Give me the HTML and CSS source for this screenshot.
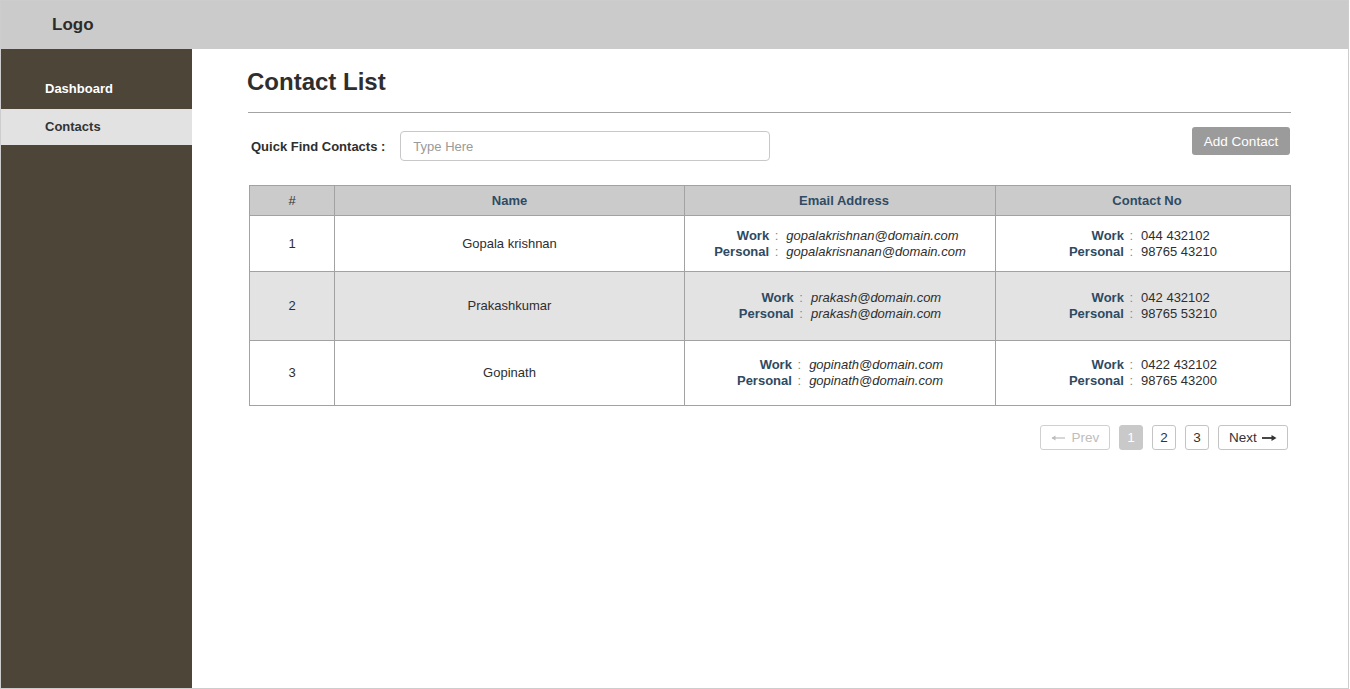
FILE: index.html
```html
<!DOCTYPE html>
<html>
<head>
<meta charset="utf-8">
<link rel="stylesheet" href="styles.css">
</head>
<body>
<div class="app">
  <header class="topbar"><span class="logo">Logo</span></header>
  <div class="body">
    <nav class="sidebar">
      <a class="nav-item nav-first">Dashboard</a>
      <a class="nav-item active">Contacts</a>
    </nav>
    <main class="main">
      <h1 class="title">Contact List</h1>
      <div class="rule"></div>
      <div class="toolbar">
        <div class="find">
          <label class="find-label">Quick Find Contacts :</label>
          <input class="find-input" type="text" placeholder="Type Here">
        </div>
        <button class="btn-add">Add Contact</button>
      </div>
      <table class="grid">
        <thead>
          <tr>
            <th class="c-num">#</th>
            <th class="c-name">Name</th>
            <th class="c-email">Email Address</th>
            <th class="c-phone">Contact No</th>
          </tr>
        </thead>
        <tbody>
          <tr class="row-1">
            <td>1</td>
            <td>Gopala krishnan</td>
            <td>
              <div class="pairs">
                <span class="k"><b>Work</b> :</span><span class="v em">gopalakrishnan@domain.com</span>
                <span class="k"><b>Personal</b> :</span><span class="v em">gopalakrisnanan@domain.com</span>
              </div>
            </td>
            <td>
              <div class="pairs">
                <span class="k"><b>Work</b> :</span><span class="v">044 432102</span>
                <span class="k"><b>Personal</b> :</span><span class="v">98765 43210</span>
              </div>
            </td>
          </tr>
          <tr class="row-2 alt">
            <td>2</td>
            <td>Prakashkumar</td>
            <td>
              <div class="pairs">
                <span class="k"><b>Work</b> :</span><span class="v em">prakash@domain.com</span>
                <span class="k"><b>Personal</b> :</span><span class="v em">prakash@domain.com</span>
              </div>
            </td>
            <td>
              <div class="pairs">
                <span class="k"><b>Work</b> :</span><span class="v">042 432102</span>
                <span class="k"><b>Personal</b> :</span><span class="v">98765 53210</span>
              </div>
            </td>
          </tr>
          <tr class="row-3">
            <td>3</td>
            <td>Gopinath</td>
            <td>
              <div class="pairs">
                <span class="k"><b>Work</b> :</span><span class="v em">gopinath@domain.com</span>
                <span class="k"><b>Personal</b> :</span><span class="v em">gopinath@domain.com</span>
              </div>
            </td>
            <td>
              <div class="pairs">
                <span class="k"><b>Work</b> :</span><span class="v">0422 432102</span>
                <span class="k"><b>Personal</b> :</span><span class="v">98765 43200</span>
              </div>
            </td>
          </tr>
        </tbody>
      </table>
      <div class="pager">
        <a class="pg pg-wide disabled"><svg class="arr" width="15" height="8" viewBox="0 0 15 8"><path d="M1 4H14" stroke="currentColor" stroke-width="1.2"/><path d="M0.5 4L4.5 1.5V6.5Z" fill="currentColor"/></svg>Prev</a>
        <a class="pg current">1</a>
        <a class="pg">2</a>
        <a class="pg">3</a>
        <a class="pg pg-wide">Next<svg class="arr arr-r" width="15" height="8" viewBox="0 0 15 8"><path d="M0 4H13" stroke="currentColor" stroke-width="1.8"/><path d="M14.5 4L9.5 1V7Z" fill="currentColor"/></svg></a>
      </div>
    </main>
  </div>
</div>
</body>
</html>
```

FILE: styles.css
```css
* { box-sizing: border-box; }
html, body { margin: 0; padding: 0; background: #fff; }
body {
  font-family: "Liberation Sans", Arial, sans-serif;
  font-size: 13px;
  color: #333;
}
.app {
  width: 1349px;
  height: 689px;
  border: 1px solid #cdcdcd;
  display: flex;
  flex-direction: column;
  overflow: hidden;
}
.topbar {
  height: 48px;
  flex: none;
  background: #cbcbcb;
  display: flex;
  align-items: center;
  padding-left: 51px;
}
.logo {
  font-size: 17px;
  font-weight: bold;
  color: #2b2b2b;
}
.body {
  flex: 1;
  display: flex;
  min-height: 0;
}
.sidebar {
  width: 191px;
  flex: none;
  background: #4d4538;
  padding-top: 20px;
  display: flex;
  flex-direction: column;
}
.nav-item {
  display: block;
  padding: 10px 0 10px 44px;
  line-height: 16px;
  font-weight: bold;
  font-size: 13px;
  color: #fff;
}
.nav-first { padding-top: 12px; padding-bottom: 12px; }
.nav-item.active {
  background: #e2e2e2;
  color: #333;
}
.main {
  flex: 1;
  padding: 19px 58px 0 55px;
}
.title {
  margin: 0;
  font-size: 24px;
  line-height: 28px;
  font-weight: bold;
  color: #2e2e2e;
}
.rule {
  height: 1px;
  background: #a3a3a3;
  margin-top: 16px;
  margin-left: 1px;
}
.toolbar {
  margin-top: 14px;
  display: flex;
  justify-content: space-between;
  align-items: flex-start;
}
.find {
  margin-top: 4px;
  display: flex;
  align-items: center;
  gap: 15px;
  padding-left: 4px;
}
.find-label {
  font-weight: bold;
  font-size: 13px;
  color: #2e2e2e;
}
.find-input {
  width: 370px;
  height: 30px;
  border: 1px solid #c8c8c8;
  border-radius: 4px;
  padding: 0 12px;
  font-family: "Liberation Sans", Arial, sans-serif;
  font-size: 13px;
  color: #333;
  outline: none;
}
.find-input::placeholder { color: #9a9a9a; }
.btn-add {
  width: 98px;
  height: 28px;
  margin-right: 1px;
  background: #9b9b9b;
  border: none;
  border-radius: 3px;
  color: #fff;
  font-family: "Liberation Sans", Arial, sans-serif;
  font-size: 13.5px;
  padding: 0;
}
.grid {
  margin-top: 24px;
  margin-left: 2px;
  width: 1042px;
  border-collapse: collapse;
  table-layout: fixed;
  border: 1px solid #a2a2a2;
}
.grid th, .grid td {
  border: 1px solid #a2a2a2;
  text-align: center;
  vertical-align: middle;
  padding: 0;
}
.grid th {
  background: #cbcbcb;
  height: 30px;
  font-weight: bold;
  font-size: 13px;
  color: #2f4b63;
}
.grid th.c-num { font-weight: normal; color: #333; }
.grid th.c-email, .grid th.c-phone { padding-left: 8px; }
.c-num { width: 85px; }
.c-name { width: 350px; }
.c-email { width: 311px; }
.c-phone { width: 295px; }
.grid td { font-size: 13px; color: #2e2e2e; line-height: 16px; }
.row-1 td { height: 56px; }
.row-2 td { height: 69px; }
.row-3 td { height: 65px; }
.alt td { background: #e3e3e3; }
.pairs {
  display: inline-grid;
  grid-template-columns: auto auto;
  text-align: left;
}
.k {
  text-align: right;
  padding-right: 8px;
  color: #888;
}
.k b {
  color: #2e4a62;
  font-weight: bold;
  margin-right: 2px;
}
.v { color: #2e2e2e; }
.em { font-style: italic; }
.pager {
  margin-top: 19px;
  margin-right: 3px;
  display: flex;
  justify-content: flex-end;
  gap: 9px;
}
.pg {
  height: 25px;
  min-width: 24px;
  border: 1px solid #c4c4c4;
  border-radius: 3px;
  display: flex;
  align-items: center;
  justify-content: center;
  font-size: 13.5px;
  color: #333;
  background: #fff;
}
.pg-wide { width: 70px; gap: 6px; }
.pg.disabled { color: #bdbdbd; border-color: #d0d0d0; }
.pg.current { background: #c9c9c9; border-color: #c9c9c9; color: #fff; }
.arr { display: block; }
.arr-r { margin-left: -1px; }
```
